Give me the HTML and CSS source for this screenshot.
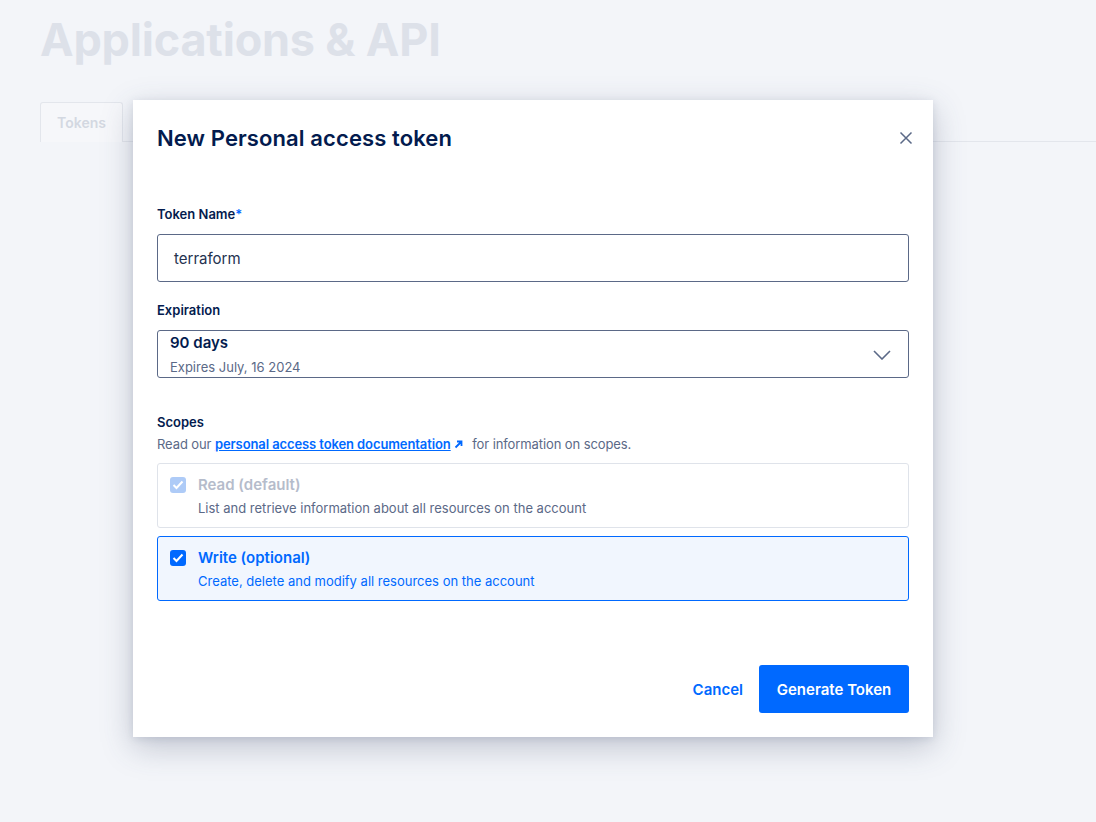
FILE: index.html
```html
<!DOCTYPE html>
<html lang="en">
<head>
<meta charset="utf-8">
<title>Applications &amp; API</title>
<link rel="stylesheet" href="styles.css">
</head>
<body>
<div class="page">
  <h1 class="page-title">Applications &amp; API</h1>
  <div class="tabs">
    <div class="tab active">Tokens</div>
    <div class="tab-rest"></div>
  </div>
</div>

<div class="modal" role="dialog">
  <div class="modal-head">
    <h2 class="modal-title">New Personal access token</h2>
    <button class="close" aria-label="Close">
      <svg width="14" height="14" viewBox="0 0 14 14"><path d="M1.5 1.5 L12.5 12.5 M12.5 1.5 L1.5 12.5" stroke="#5b6987" stroke-width="1.5" fill="none"/></svg>
    </button>
  </div>

  <label class="label first">Token Name<span class="req">*</span></label>
  <div class="input">terraform</div>

  <label class="label exp">Expiration</label>
  <div class="select">
    <div class="select-text">
      <div class="select-main">90 days</div>
      <div class="select-sub">Expires July, 16 2024</div>
    </div>
    <svg class="chev" width="18" height="10" viewBox="0 0 18 10"><path d="M1 1 L9 9 L17 1" stroke="#5b6987" stroke-width="1.6" fill="none"/></svg>
  </div>

  <label class="label scopes">Scopes</label>
  <p class="help">Read our <a class="doc-link" href="#">personal access token documentation</a><svg class="ext" width="9" height="9" viewBox="0 0 9 9"><path d="M1.5 7.5 L7 2 M3 1.5 H7.5 V6" stroke="#0069ff" stroke-width="1.8" fill="none"/></svg> for information on scopes.</p>

  <div class="scope disabled">
    <span class="cb cb-disabled"><svg width="12" height="10" viewBox="0 0 12 10"><path d="M1.5 5 L4.5 8 L10.5 1.5" stroke="#fff" stroke-width="2" fill="none"/></svg></span>
    <div class="scope-text">
      <div class="scope-title">Read (default)</div>
      <div class="scope-desc">List and retrieve information about all resources on the account</div>
    </div>
  </div>

  <div class="scope selected">
    <span class="cb cb-on"><svg width="12" height="10" viewBox="0 0 12 10"><path d="M1.5 5 L4.5 8 L10.5 1.5" stroke="#fff" stroke-width="2" fill="none"/></svg></span>
    <div class="scope-text">
      <div class="scope-title">Write (optional)</div>
      <div class="scope-desc">Create, delete and modify all resources on the account</div>
    </div>
  </div>

  <div class="footer">
    <button class="btn-link">Cancel</button>
    <button class="btn-primary">Generate Token</button>
  </div>
</div>
</body>
</html>
```

FILE: styles.css
```css
* { box-sizing: border-box; }
html, body { margin: 0; padding: 0; }
body {
  background: #f3f5f9;
  font-family: "Inter", "Liberation Sans", sans-serif;
  width: 1096px;
  height: 822px;
  overflow: hidden;
  position: relative;
}
.page { padding: 12px 0 0 40px; }
.page-title {
  margin: 0;
  font-size: 45px;
  font-weight: 700;
  color: #dde1e9;
  line-height: 56px;
  letter-spacing: -0.2px;
}
.tabs {
  display: flex;
  margin-top: 34px;
  height: 40px;
}
.tab {
  width: 83px;
  border: 1px solid #e3e6ec;
  border-bottom: none;
  border-radius: 3px 3px 0 0;
  background: #f6f7fa;
  color: #d3d8e1;
  font-weight: 600;
  font-size: 14px;
  display: flex;
  align-items: center;
  justify-content: center;
}
.tab-rest { flex: 1; border-bottom: 1px solid #e3e6ec; }

.modal {
  position: absolute;
  left: 133px;
  top: 100px;
  width: 800px;
  height: 637px;
  background: #fff;
  box-shadow: 0 10px 30px rgba(60, 72, 105, 0.28), 0 2px 8px rgba(60,72,105,0.12);
  padding: 24px 24px 24px 24px;
  display: flex;
  flex-direction: column;
  color: #031b4e;
}
.modal-head {
  display: flex;
  align-items: center;
  justify-content: space-between;
  height: 28px;
  flex: none;
}
.modal-title {
  margin: 0;
  font-size: 22px;
  font-weight: 600;
  color: #031b4e;
  line-height: 28px;
  letter-spacing: 0.1px;
}
.close {
  border: none;
  background: none;
  padding: 0;
  margin-right: -7px;
  width: 20px;
  height: 20px;
  display: flex;
  align-items: center;
  justify-content: center;
}
.label {
  display: block;
  font-size: 13px;
  font-weight: 600;
  line-height: 18px;
  color: #031b4e;
  flex: none;
}
.label.first { margin-top: 53px; }
.label.exp { margin-top: 19px; }
.label.scopes { margin-top: 35px; }
.req { color: #0069ff; }
.input {
  margin-top: 11px;
  height: 48px;
  flex: none;
  border: 1px solid #5b6987;
  border-radius: 3px;
  padding: 0 16px;
  display: flex;
  align-items: center;
  font-size: 15px;
  color: #24324f;
}
.select {
  margin-top: 11px;
  height: 48px;
  flex: none;
  border: 1px solid #5b6987;
  border-radius: 3px;
  padding: 2px 17px 0 12px;
  display: flex;
  align-items: flex-start;
  justify-content: space-between;
}
.select-main {
  font-size: 15px;
  font-weight: 600;
  line-height: 20px;
  color: #031b4e;
}
.select-sub {
  margin-top: 5px;
  font-size: 13px;
  line-height: 18px;
  color: #5b6987;
}
.chev { margin-top: 17px; }
.help {
  margin: 4px 0 0 0;
  font-size: 13px;
  line-height: 18px;
  color: #5b6987;
  flex: none;
  letter-spacing: -0.1px;
}
.doc-link {
  color: #0069ff;
  font-weight: 600;
  text-decoration: underline;
}
.ext { margin: 0 6px 0 3px; }
.scope {
  margin-top: 10px;
  height: 65px;
  flex: none;
  border: 1px solid #dfe3ea;
  border-radius: 3px;
  padding: 11px 12px 0 12px;
  display: flex;
  gap: 12px;
}
.scope.selected {
  margin-top: 8px;
  background: #f1f6fe;
  border-color: #0069ff;
}
.cb {
  width: 16px;
  height: 16px;
  border-radius: 3px;
  margin-top: 2px;
  display: flex;
  align-items: center;
  justify-content: center;
  flex: none;
}
.cb-disabled { background: #aecbf7; }
.cb-on { background: #0069ff; }
.scope-title {
  font-size: 15px;
  font-weight: 600;
  line-height: 20px;
}
.scope-desc {
  margin-top: 4px;
  font-size: 13px;
  line-height: 18px;
  color: #5b6987;
}
.disabled .scope-title { color: #b5bccb; }
.selected .scope-title { color: #0069ff; }
.selected .scope-desc { color: #0069ff; }
.footer {
  margin-top: auto;
  display: flex;
  justify-content: flex-end;
  align-items: center;
  gap: 16px;
}
.btn-link {
  border: none;
  background: none;
  padding: 0;
  font-family: inherit;
  font-size: 15px;
  font-weight: 600;
  color: #0069ff;
}
.btn-primary {
  border: none;
  background: #0069ff;
  color: #fff;
  font-family: inherit;
  font-size: 15px;
  font-weight: 600;
  height: 48px;
  width: 150px;
  border-radius: 3px;
}
```
